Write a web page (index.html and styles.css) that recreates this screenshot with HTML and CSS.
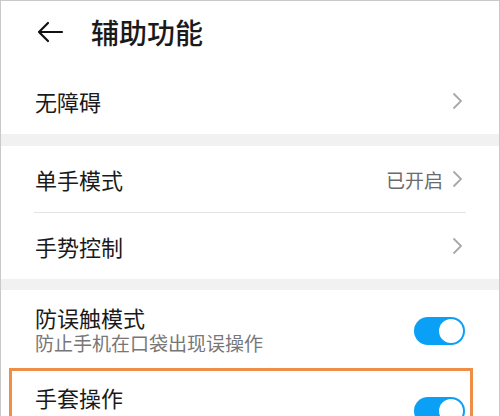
FILE: index.html
```html
<!DOCTYPE html>
<html lang="zh-CN">
<head>
    <meta charset="UTF-8">
    <meta name="viewport" content="width=device-width, initial-scale=1.0">
    <title>辅助功能</title>
    <link rel="stylesheet" href="styles.css">
</head>
<body>
    <div class="screen">
        <section class="group">
            <header class="topbar">
                <svg class="back" width="28" height="22" viewBox="0 0 28 22">
                    <path d="M26 11 H3 M12 2 L3 11 L12 20" fill="none" stroke="#111" stroke-width="2.2" stroke-linecap="round" stroke-linejoin="round"/>
                </svg>
                <h1>辅助功能</h1>
            </header>
            <div class="row">
                <span class="label">无障碍</span>
                <svg class="chevron" width="11" height="18" viewBox="0 0 11 18"><polyline points="1.5,1.5 9,9 1.5,16.5" fill="none" stroke="#a8a8a8" stroke-width="1.8"/></svg>
            </div>
        </section>

        <section class="group">
            <div class="row">
                <span class="label">单手模式</span>
                <span class="value">已开启</span>
                <svg class="chevron" width="11" height="18" viewBox="0 0 11 18"><polyline points="1.5,1.5 9,9 1.5,16.5" fill="none" stroke="#a8a8a8" stroke-width="1.8"/></svg>
            </div>
            <div class="divider"></div>
            <div class="row">
                <span class="label">手势控制</span>
                <svg class="chevron" width="11" height="18" viewBox="0 0 11 18"><polyline points="1.5,1.5 9,9 1.5,16.5" fill="none" stroke="#a8a8a8" stroke-width="1.8"/></svg>
            </div>
        </section>

        <section class="group">
            <div class="row tall">
                <div class="text">
                    <span class="label">防误触模式</span>
                    <span class="hint">防止手机在口袋出现误操作</span>
                </div>
                <span class="switch on"><span class="knob"></span></span>
            </div>
            <div class="row tall highlight">
                <div class="text">
                    <span class="label">手套操作</span>
                </div>
                <span class="switch on"><span class="knob"></span></span>
            </div>
        </section>
    </div>
</body>
</html>
```

FILE: styles.css
```css
body {
    margin: 0;
    background-color: #f1f1f1;
    font-family: "Noto Sans CJK SC", "Noto Sans", sans-serif;
    color: #1a1a1a;
}

.screen {
    width: 500px;
    height: 416px;
    overflow: hidden;
    border: 1px solid #c9c9c9;
    border-bottom: none;
    box-sizing: border-box;
    display: flex;
    flex-direction: column;
    gap: 12px;
}

.group {
    background-color: #ffffff;
}

.group:nth-child(2) {
    margin-bottom: -1px;
}

.topbar {
    display: flex;
    align-items: center;
    height: 61px;
    padding: 0 0 6px 35px;
}

.back {
    display: block;
}

.topbar h1 {
    margin: 0 0 0 27px;
    font-size: 28px;
    font-weight: 500;
    line-height: 1;
}

.row {
    display: flex;
    align-items: center;
    min-height: 66px;
    padding: 0 35px 0 34px;
    position: relative;
}

.row.tall {
    align-items: flex-start;
    min-height: 80px;
    padding-top: 14px;
    box-sizing: border-box;
}

.label {
    flex: 1;
    font-size: 22px;
    line-height: 26px;
}

.value {
    font-size: 19px;
    color: #6b6b6b;
    margin-right: 9px;
}

.chevron {
    display: block;
    margin-right: 1px;
}

.divider {
    height: 1px;
    background-color: #e4e4e4;
    margin: 0 33px;
}

.text {
    flex: 1;
    display: flex;
    flex-direction: column;
}

.hint {
    font-size: 19px;
    line-height: 26px;
    color: #777;
}

.switch {
    width: 51px;
    height: 28px;
    border-radius: 14px;
    background-color: #0aa0f5;
    display: flex;
    align-items: center;
    justify-content: flex-end;
    padding: 0 2px;
    box-sizing: border-box;
    margin: 13px -1px 0 0;
}

.knob {
    width: 24px;
    height: 24px;
    border-radius: 50%;
    background-color: #ffffff;
}

.highlight {
    padding-top: 15px;
}

.highlight::after {
    content: "";
    position: absolute;
    top: -2px;
    left: 8px;
    right: 26px;
    height: 120px;
    border: 3px solid #ef8e47;
}
```
